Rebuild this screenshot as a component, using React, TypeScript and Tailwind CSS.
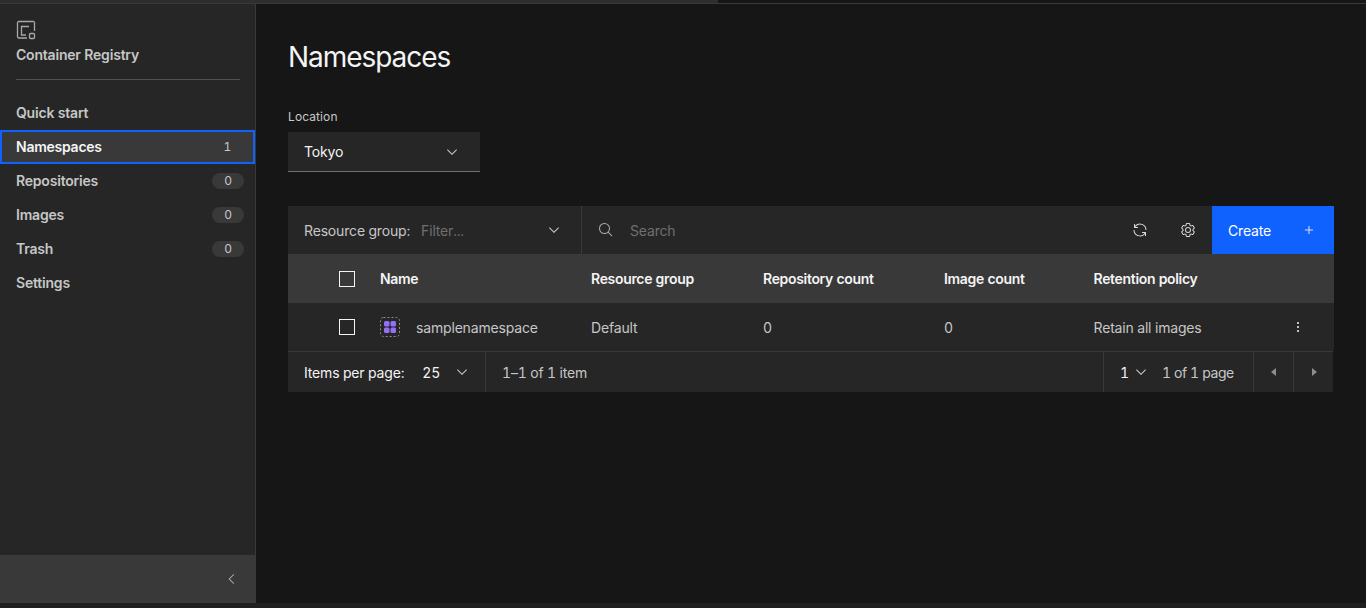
import type { ReactNode } from 'react';

const font = 'font-["Inter","Noto_Sans",sans-serif]';

function Carbon({ d, size = 16, className = '' }: { d: string | string[]; size?: number; className?: string }) {
  const paths = Array.isArray(d) ? d : [d];
  return (
    <svg width={size} height={size} viewBox="0 0 32 32" fill="currentColor" className={`shrink-0 ${className}`}>
      {paths.map((p) => <path key={p} d={p} />)}
    </svg>
  );
}

const chevronDown = 'M16 22L6 12 7.4 10.6 16 19.2 24.6 10.6 26 12z';
const chevronLeft = 'M11 16L21 6l1.4 1.4L13.8 16l8.6 8.6L21 26z';
const search = 'M29,27.5859l-7.5521-7.5521a11.0177,11.0177,0,1,0-1.4141,1.4141L27.5859,29ZM4,13a9,9,0,1,1,9,9A9.01,9.01,0,0,1,4,13Z';
const renew = ['M12,10H6.78A11,11,0,0,1,27,16h2A13,13,0,0,0,6,7.68V4H4v8h8Z', 'M20,22h5.22A11,11,0,0,1,5,16H3a13,13,0,0,0,23,8.32V28h2V20H20Z'];
const settings = [
  'M27,16.76c0-.25,0-.5,0-.76s0-.51,0-.77l1.92-1.68A2,2,0,0,0,29.3,11L26.94,7a2,2,0,0,0-1.73-1,2,2,0,0,0-.64.1l-2.43.82a11.35,11.35,0,0,0-1.31-.75l-.51-2.52a2,2,0,0,0-2-1.61H13.64a2,2,0,0,0-2,1.61l-.51,2.52a11.48,11.48,0,0,0-1.32.75L7.43,6.06A2,2,0,0,0,6.79,6,2,2,0,0,0,5.06,7L2.7,11a2,2,0,0,0,.41,2.51L5,15.24c0,.25,0,.5,0,.76s0,.51,0,.77L3.11,18.45A2,2,0,0,0,2.7,21L5.06,25a2,2,0,0,0,1.73,1,2,2,0,0,0,.64-.1l2.43-.82a11.35,11.35,0,0,0,1.31.75l.51,2.52a2,2,0,0,0,2,1.61h4.72a2,2,0,0,0,2-1.61l.51-2.52a11.48,11.48,0,0,0,1.32-.75l2.42.82a2,2,0,0,0,.64.1,2,2,0,0,0,1.73-1L29.3,21a2,2,0,0,0-.41-2.51ZM25.21,24l-3.43-1.16a8.86,8.86,0,0,1-2.71,1.57L18.36,28H13.64l-.71-3.55a9.36,9.36,0,0,1-2.7-1.57L6.79,24,4.43,20l2.72-2.4a8.9,8.9,0,0,1,0-3.13L4.43,12,6.79,8l3.43,1.16a8.86,8.86,0,0,1,2.71-1.57L13.64,4h4.72l.71,3.55a9.36,9.36,0,0,1,2.7,1.57L25.21,8,27.57,12l-2.72,2.4a8.9,8.9,0,0,1,0,3.13L27.57,20Z',
  'M16,22a6,6,0,1,1,6-6A5.94,5.94,0,0,1,16,22Zm0-10a3.91,3.91,0,0,0-4,4,3.91,3.91,0,0,0,4,4,3.91,3.91,0,0,0,4-4A3.91,3.91,0,0,0,16,12Z',
];

function NavItem({ label, count }: { label: string; count?: string }) {
  return (
    <div className="flex h-[34px] items-center justify-between pl-4 pr-[11px]">
      <span className="-translate-y-px text-[14px] font-semibold tracking-[-0.2px] text-[#c6c6c6]">{label}</span>
      {count && (
        <span className="flex h-[16px] w-[32px] items-center justify-center rounded-full bg-[#393939] text-[12px] text-[#c6c6c6]">{count}</span>
      )}
    </div>
  );
}

function Checkbox() {
  return <span className="block h-4 w-4 border border-[#f4f4f4]" />;
}

// shared table columns so header and row line up
const cols = 'grid grid-cols-[92px_211px_172px_181px_149.5px_1fr_60px] items-center';

function Cell({ children, className = '' }: { children: ReactNode; className?: string }) {
  return <div className={`truncate ${className}`}>{children}</div>;
}

export default function App() {
  return (
    <div className={`flex h-screen flex-col overflow-hidden bg-[#161616] text-[14px] tracking-[-0.17px] tabular-nums ${font}`}>
      { /* Top strip */}
      <div className="flex h-[4px] shrink-0 flex-col">
        <div className="h-[3px] w-[718px] bg-[#2e2e2e]" />
        <div className="h-px bg-[#393939]" />
      </div>

      <div className="flex min-h-0 flex-1">
        { /* Sidebar */}
        <aside className="flex w-[256px] shrink-0 flex-col border-r border-[#393939] bg-[#262626]">
          <div className="flex-1">
            <div className="px-4 pt-[16px]">
              <svg width="20" height="20" viewBox="0 0 20 20" fill="none" stroke="#a8a8a8" strokeWidth="1.3">
                <path d="M11 18H2.4A1.4 1.4 0 0 1 1.5 16.6V2.4A1.4 1.4 0 0 1 2.4 1.5h14.2A1.4 1.4 0 0 1 18.5 2.4V11" />
                <path d="M13 6.5H5.5v8.5H10" />
                <rect x="13.5" y="13.5" width="5" height="5" rx="1" />
              </svg>
              <div className="mt-[4px] text-[14px] font-semibold tracking-[-0.2px] text-[#c6c6c6]">Container Registry</div>
              <div className="mt-[14px] h-px w-[224px] bg-[#525252]" />
            </div>
            <div className="mt-[16px]">
              <NavItem label="Quick start" />
              <div className="flex h-[34px] items-center justify-between border-2 border-[#0f62fe] bg-[#393939] pl-[14px] pr-[22px]">
                <span className="-translate-y-px text-[14px] font-semibold tracking-[-0.25px] text-[#f4f4f4]">Namespaces</span>
                <span className="text-[12px] text-[#c6c6c6]">1</span>
              </div>
              <NavItem label="Repositories" count="0" />
              <NavItem label="Images" count="0" />
              <NavItem label="Trash" count="0" />
              <NavItem label="Settings" />
            </div>
          </div>
          <div className="flex h-[48px] items-center justify-end bg-[#393939] pr-[16px]">
            <Carbon d={chevronLeft} className="text-[#a8a8a8]" />
          </div>
        </aside>

        { /* Main */}
        <main className="min-w-0 flex-1 pl-[32px] pr-[32px]">
          <h1 className="mt-[35px] text-[28px] leading-[36px] tracking-[-1.05px] text-[#f4f4f4]">Namespaces</h1>

          <div className="mt-[34px] text-[12px] leading-[16px] tracking-[0.1px] text-[#c6c6c6]">Location</div>
          <div className="mt-[7px] flex h-[40px] w-[192px] items-center justify-between border-b border-[#6f6f6f] bg-[#262626] pl-4 pr-[20px]">
            <span className="text-[#f4f4f4]">Tokyo</span>
            <Carbon d={chevronDown} className="text-[#c6c6c6]" />
          </div>

          <div className="mt-[34px] w-[1046px]">
            { /* Toolbar */}
            <div className="flex h-[48px] items-center bg-[#262626]">
              <div className="flex h-full w-[294px] items-center border-r border-[#393939] pl-4 pr-[19px]">
                <span className="text-[#c6c6c6]">Resource group:</span>
                <span className="ml-[11px] flex-1 text-[#6f6f6f]">Filter...</span>
                <Carbon d={chevronDown} className="text-[#c6c6c6]" />
              </div>
              <div className="flex h-full flex-1 items-center pl-4">
                <Carbon d={search} className="text-[#a8a8a8]" />
                <span className="ml-4 flex-1 text-[#6f6f6f]">Search</span>
                <div className="flex h-12 w-12 items-center justify-center"><Carbon d={renew} className="text-[#d6d6d6]" /></div>
                <div className="flex h-12 w-12 items-center justify-center"><Carbon d={settings} className="text-[#d6d6d6]" /></div>
              </div>
              <div className="flex h-full w-[122px] items-center justify-between bg-[#0f62fe] pl-4 pr-[17px] text-white">
                <span>Create</span>
                <Carbon d="M17 15V8h-2v7H8v2h7v7h2v-7h7v-2z" className="text-[#e0e0e0]" />
              </div>
            </div>

            { /* Header row */}
            <div className={`${cols} h-[49px] bg-[#393939] font-semibold tracking-[-0.32px] text-[#f4f4f4]`}>
              <div className="pl-[51px]"><Checkbox /></div>
              <Cell>Name</Cell>
              <Cell>Resource group</Cell>
              <Cell>Repository count</Cell>
              <Cell>Image count</Cell>
              <Cell>Retention policy</Cell>
              <div />
            </div>

            { /* Data row */}
            <div className={`${cols} h-[48px] bg-[#262626] text-[#c6c6c6]`}>
              <div className="pl-[51px]"><Checkbox /></div>
              <div className="flex items-center gap-4">
                <svg width="20" height="20" viewBox="0 0 20 20" className="shrink-0">
                  <rect x="0.5" y="0.5" width="19" height="19" rx="3" fill="none" stroke="#8d8d8d" strokeDasharray="2 2" />
                  <rect x="4" y="4" width="5.5" height="5.5" rx="1.5" fill="#9270f5" />
                  <rect x="10.5" y="4" width="5.5" height="5.5" rx="1.5" fill="#9270f5" />
                  <rect x="4" y="10.5" width="5.5" height="5.5" rx="1.5" fill="#9270f5" />
                  <rect x="10.5" y="10.5" width="5.5" height="5.5" rx="1.5" fill="#9270f5" />
                </svg>
                <span>samplenamespace</span>
              </div>
              <Cell>Default</Cell>
              <Cell>0</Cell>
              <Cell>0</Cell>
              <Cell>Retain all images</Cell>
              <div className="flex justify-center pr-[12px] text-[#f4f4f4]">
                <svg width="16" height="16" viewBox="0 0 32 32" fill="currentColor">
                  <circle cx="16" cy="8" r="2" /><circle cx="16" cy="16" r="2" /><circle cx="16" cy="24" r="2" />
                </svg>
              </div>
            </div>

            { /* Pagination */}
            <div className="flex h-[41px] w-[1045px] items-center border-t border-[#393939] bg-[#262626] text-[#c6c6c6]">
              <div className="flex h-full w-[198px] items-center border-r border-[#393939] pl-4">
                <span className="text-[#f4f4f4]">Items per page:</span>
                <span className="ml-[18px] text-[#f4f4f4]">25</span>
                <Carbon d={chevronDown} className="ml-[14px] text-[#c6c6c6]" />
              </div>
              <span className="ml-4 flex-1">1–1 of 1 item</span>
              <div className="flex h-full w-[151px] items-center border-l border-r border-[#393939] pl-4">
                <span className="text-[#f4f4f4]">1</span>
                <Carbon d={chevronDown} className="ml-[4px] text-[#c6c6c6]" />
                <span className="ml-[13px] tracking-[-0.4px]">1 of 1 page</span>
              </div>
              <div className="flex h-full w-[40px] items-center justify-center border-r border-[#393939]">
                <Carbon d="M20 24L10 16 20 8z" className="text-[#8d8d8d]" />
              </div>
              <div className="flex h-full w-[39px] items-center justify-center">
                <Carbon d="M12 8L22 16 12 24z" className="text-[#8d8d8d]" />
              </div>
            </div>
          </div>
        </main>
      </div>

      { /* Bottom strip */}
      <div className="h-[5px] shrink-0 bg-[#1f1f1f]" />
    </div>
  );
}
